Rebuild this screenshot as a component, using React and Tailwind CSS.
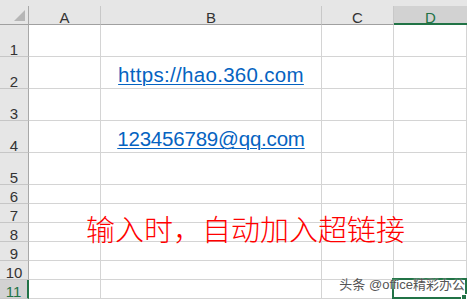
import React from 'react';

const cols = [
  { key: 'A', w: 'w-[72px]' },
  { key: 'B', w: 'w-[221px]' },
  { key: 'C', w: 'w-[72px]' },
  { key: 'D', w: 'w-[73px]' },
];

// row heights include the bottom grid line
const rows = [
  { n: 1, h: 'h-[32px]' },
  { n: 2, h: 'h-[32px]', b: 'https://hao.360.com', ls: 'tracking-[0.3px]' },
  { n: 3, h: 'h-[32px]' },
  { n: 4, h: 'h-[32px]', b: '123456789@qq.com', ls: 'tracking-[-0.2px]' },
  { n: 5, h: 'h-[32px]' },
  { n: 6, h: 'h-[19px]' },
  { n: 7, h: 'h-[19px]' },
  { n: 8, h: 'h-[19px]' },
  { n: 9, h: 'h-[19px]' },
  { n: 10, h: 'h-[19px]' },
  { n: 11, h: 'h-[19px]', selected: true },
];

const font = { fontFamily: '"Liberation Sans", Arial, sans-serif' };

const App = () => {
  return (
    <div className="relative w-[467px] h-[301px] overflow-hidden bg-white" style={font}>
      {/* strip above the column headers */}
      <div className="h-[6px] bg-[#e6e6e6]" />

      {/* column headers */}
      <div className="flex h-[19px]">
        <div className="w-[29px] bg-[#e6e6e6] border-r border-r-[#a8a8a8] border-b border-b-[#a0a0a0] relative">
          <svg className="absolute left-[14px] top-[4px]" width="11" height="11" viewBox="0 0 11 11">
            <polygon points="11,0 11,11 0,11" fill="#b6b6b6" />
          </svg>
        </div>
        {cols.map(col => (
          <div
            key={col.key}
            className={
              col.key === 'D'
                ? `${col.w} bg-[#d2d2d2] border-b-2 border-b-[#217346] flex items-end justify-center text-[15px] leading-[12px] text-[#217346]`
                : `${col.w} bg-[#e6e6e6] border-r border-r-[#c8c8c8] border-b border-b-[#a0a0a0] flex items-end justify-center text-[15px] leading-[12px] text-[#333]`
            }
          >
            <span className={col.key === 'D' ? '-mb-px' : ''}>{col.key}</span>
          </div>
        ))}
      </div>

      {/* grid rows */}
      {rows.map(row => (
        <div key={row.n} className={`flex ${row.h}`}>
          <div
            className={
              row.selected
                ? 'w-[29px] bg-[#d2d2d2] border-r-2 border-r-[#217346] border-b border-b-[#c6c6c6] flex items-end justify-center text-[15px] leading-[12px] text-[#217346]'
                : 'w-[29px] bg-[#e6e6e6] border-r border-r-[#a8a8a8] border-b border-b-[#c6c6c6] flex items-end justify-center text-[15px] leading-[12px] text-[#333]'
            }
          >
            {row.n}
          </div>
          {cols.map(col => (
            <div
              key={col.key}
              className={`${col.w} border-r border-b border-[#d4d4d4] flex items-end justify-center`}
            >
              {col.key === 'B' && row.b && (
                <span className={`text-[20.5px] leading-[20px] pb-[3px] text-[#0563c1] underline underline-offset-[2px] decoration-1 ${row.ls}`}>
                  {row.b}
                </span>
              )}
            </div>
          ))}
        </div>
      ))}

      {/* text box over the sheet */}
      <div
        className="absolute left-[86px] top-[213px] text-[29px] leading-[30px] text-[#ff0000] whitespace-nowrap"
        style={{ fontFamily: '"Noto Sans CJK SC", sans-serif', fontWeight: 300 }}
      >
        输入时，自动加入超链接
      </div>

      {/* active cell D11 */}
      <div className="absolute left-[392px] top-[278px] w-[75px] h-[21px] border-2 border-[#217346]" />
      <div className="absolute left-[461px] top-[294px] w-[6px] h-[6px] bg-[#217346] border border-white" />

      {/* watermark */}
      <div
        className="absolute right-[2px] top-[277px] text-[13px] leading-[16px] text-[#555] whitespace-nowrap"
        style={{ fontFamily: '"Liberation Sans", "Noto Sans CJK SC", sans-serif', textShadow: '0 0 2px #fff' }}
      >
        头条 @office精彩办公
      </div>
    </div>
  );
};

export default App;
